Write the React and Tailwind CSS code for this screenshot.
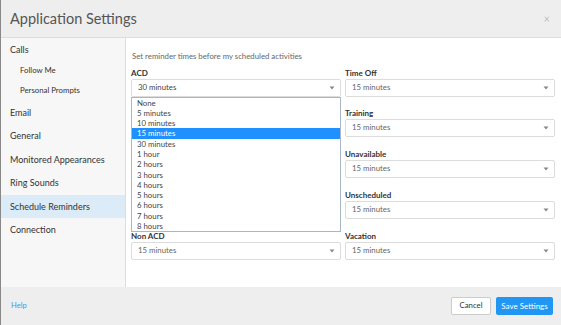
import React from 'react'

const nav = [
  { label: 'Calls', h: 'h-[23px]', sub: false },
  { label: 'Follow Me', h: 'h-[20px]', sub: true },
  { label: 'Personal Prompts', h: 'h-[20px]', sub: true },
  { label: 'Email', h: 'h-[23.4px]', sub: false },
  { label: 'General', h: 'h-[23.4px]', sub: false },
  { label: 'Monitored Appearances', h: 'h-[23.4px]', sub: false },
  { label: 'Ring Sounds', h: 'h-[23.4px]', sub: false },
  { label: 'Schedule Reminders', h: 'h-[23.4px]', sub: false, active: true },
  { label: 'Connection', h: 'h-[23.4px]', sub: false },
]

const options = [
  'None',
  '5 minutes',
  '10 minutes',
  '15 minutes',
  '30 minutes',
  '1 hour',
  '2 hours',
  '3 hours',
  '4 hours',
  '5 hours',
  '6 hours',
  '7 hours',
  '8 hours',
]

// rows 2-4 on the left sit under the open ACD list
const leftFields = [
  { label: 'ACD', value: '30 minutes', open: true },
  { label: 'Break', value: '15 minutes', covered: true },
  { label: 'Lunch', value: '15 minutes', covered: true },
  { label: 'Meeting', value: '15 minutes', covered: true },
  { label: 'Non ACD', value: '15 minutes' },
]

const rightFields = [
  { label: 'Time Off', value: '15 minutes' },
  { label: 'Training', value: '15 minutes' },
  { label: 'Unavailable', value: '15 minutes' },
  { label: 'Unscheduled', value: '15 minutes' },
  { label: 'Vacation', value: '15 minutes' },
]

function Caret() {
  return (
    <svg width="6" height="4" viewBox="0 0 6 4" className="shrink-0">
      <path d="M0.5 0.5h5L3 3.5z" fill="#888" />
    </svg>
  )
}

function Field({ field }) {
  return (
    <div className="flex flex-col">
      <div
        className={`pt-[2px] text-[8px] leading-[11px] font-bold text-[#333] ${
          field.covered ? 'invisible' : ''
        }`}
      >
        {field.label}
      </div>
      <div className="relative">
        <div className="h-[18px] flex items-center justify-between pl-[6px] pr-[5px] bg-white border border-[#dcdcdc] rounded-[2px]">
          <span
            className={`text-[7.8px] ${field.open ? 'text-[#444]' : 'text-[#666]'} ${
              field.covered ? 'invisible' : ''
            }`}
          >
            {field.value}
          </span>
          <Caret />
        </div>
        {field.open && (
          <div className="absolute left-0 right-0 top-full z-10 bg-white border border-[#a9b6c9]">
            {options.map((opt) => (
              <div
                key={opt}
                className={`h-[10.3px] leading-[10.3px] pl-[5px] text-[7.8px] ${
                  opt === '15 minutes' ? 'bg-[#1e90ff] text-white' : 'text-[#444]'
                }`}
              >
                {opt}
              </div>
            ))}
          </div>
        )}
      </div>
    </div>
  )
}

export default function App() {
  return (
    <div
      className="w-[561px] h-[325px] flex flex-col bg-white border-l border-[#888] overflow-hidden"
      style={{ fontFamily: 'Lato, "Open Sans", sans-serif' }}
    >
      <div className="h-[38px] shrink-0 flex items-center justify-between pl-[9px] pr-[11px] bg-[#eeeeee] border-b border-[#dddddd]">
        <h1 className="text-[14.5px] text-[#555] font-normal">Application Settings</h1>
        <span className="text-[11px] leading-none text-[#c0c0c0]">×</span>
      </div>

      <div className="flex flex-1 min-h-0">
        <div className="w-[125px] shrink-0 bg-[#f7f7f7] border-r border-[#dddddd]">
          {nav.map((item) => (
            <div
              key={item.label}
              className={`${item.h} flex items-center ${
                item.sub ? 'pl-[19px] text-[7.8px]' : 'pl-[9px] text-[9px]'
              } ${item.active ? 'bg-[#dcebf8]' : ''} text-[#333]`}
            >
              {item.label}
            </div>
          ))}
        </div>

        <div className="flex-1 pl-[5px] pr-[6px] pt-[12.5px]">
          <p className="text-[7.8px] leading-[11px] text-[#666] pl-[1px] mb-[4px]">
            Set reminder times before my scheduled activities
          </p>
          <div className="grid grid-cols-2 gap-x-[4px]">
            <div className="flex flex-col gap-y-[9.75px]">
              {leftFields.map((f) => (
                <Field key={f.label} field={f} />
              ))}
            </div>
            <div className="flex flex-col gap-y-[9.75px]">
              {rightFields.map((f) => (
                <Field key={f.label} field={f} />
              ))}
            </div>
          </div>
        </div>
      </div>

      <div className="h-[38px] shrink-0 flex items-center justify-between pl-[10px] pr-[8px] bg-[#eeeeee]">
        <span className="text-[7.6px] text-[#3a9af0]">Help</span>
        <div className="flex gap-[5px]">
          <button className="h-[18px] w-[40px] text-[7.8px] text-[#333] bg-white border border-[#cccccc] rounded-[2px]">
            Cancel
          </button>
          <button className="h-[18px] w-[57px] text-[8px] text-white bg-[#2196f3] rounded-[2px]">
            Save Settings
          </button>
        </div>
      </div>
    </div>
  )
}
